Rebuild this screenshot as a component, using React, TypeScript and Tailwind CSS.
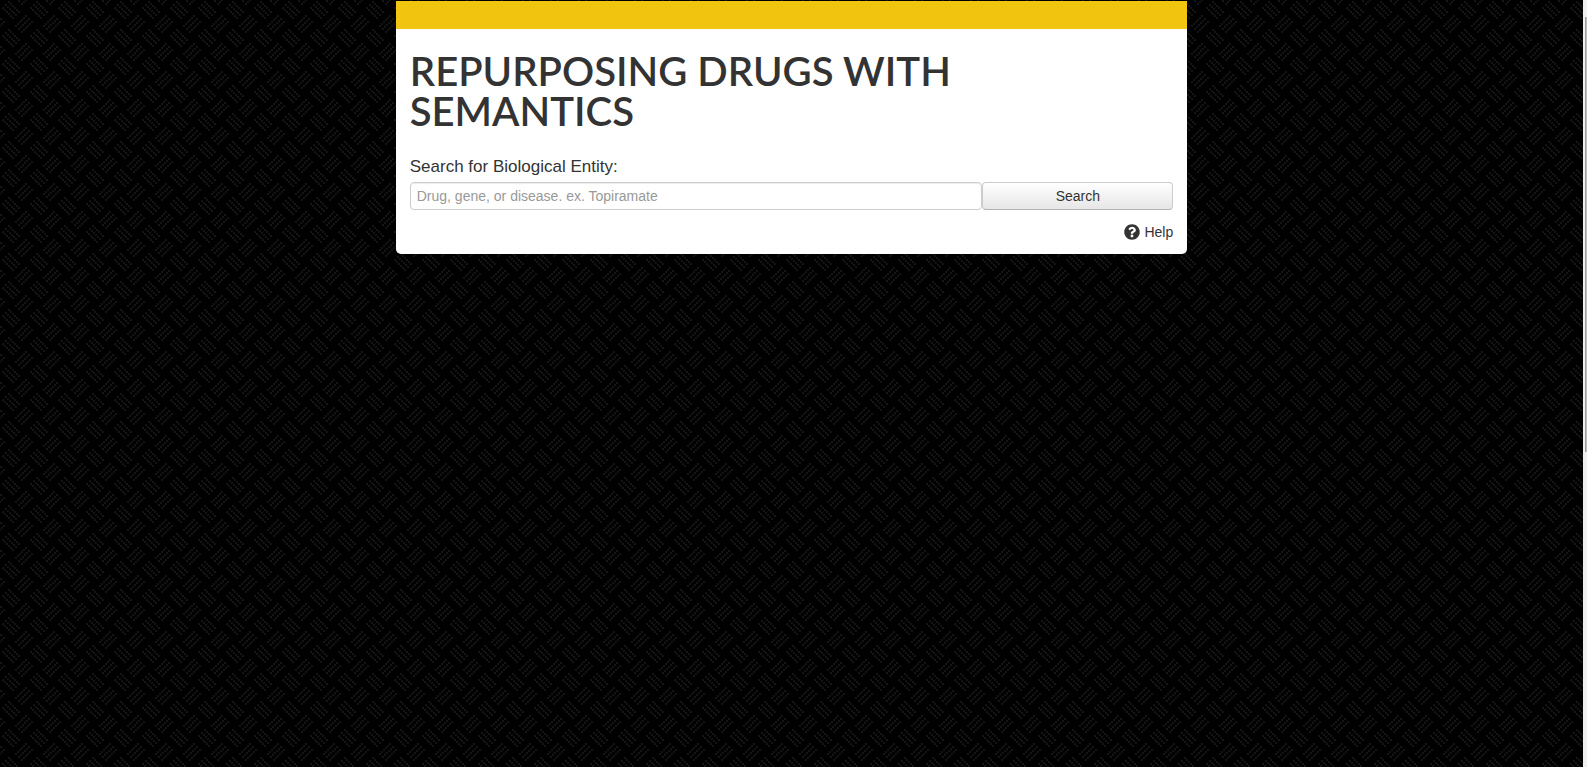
import { FaQuestionCircle } from "react-icons/fa";

const strokeOffsets = [-3, 0, 3];
const dotSteps = [-5, -3, -1, 1, 3, 5];

function WeaveBackground() {
  return (
    <svg className="absolute inset-0 -z-10 h-full w-full" aria-hidden="true">
      <defs>
        <pattern id="weave" width="28" height="28" patternUnits="userSpaceOnUse">
          <rect width="28" height="28" fill="#000" />
          {strokeOffsets.map((s) =>
            dotSteps.map((d) => (
              <g key={`${s}:${d}`} fill="#151515">
                <rect x={10 + d + s} y={9 + d - s} width="2" height="2" />
                <rect x={23 + d + s} y={23 - d + s} width="2" height="2" />
                <rect x={-5 + d + s} y={23 - d + s} width="2" height="2" />
                <rect x={23 + d + s} y={-5 - d + s} width="2" height="2" />
                <rect x={-5 + d + s} y={-5 - d + s} width="2" height="2" />
              </g>
            )),
          )}
        </pattern>
      </defs>
      <rect width="100%" height="100%" fill="url(#weave)" />
    </svg>
  );
}

function Scrollbar() {
  return (
    <div className="flex w-1 shrink-0 flex-col bg-[#f0f0f0] pt-[17px] pl-[2px]" aria-hidden="true">
      <div className="h-[58%] border-l border-[#a0a0a0] bg-[#bdbdbd]" />
    </div>
  );
}

export default function App() {
  return (
    <div className="flex min-h-screen bg-black font-['Liberation_Sans',Arial,sans-serif] text-[#333333]">
      <div className="relative isolate flex-1 pt-px">
        <WeaveBackground />
        <main className="mx-auto w-1/2 overflow-hidden rounded-b-[5px] bg-white">
          <div className="h-7 bg-[#f1c40f]" />
          <div className="px-3.5 pt-[22px] pb-3">
            <h1 className="font-['Lato',sans-serif] text-[40px] leading-10 font-semibold">
              REPURPOSING DRUGS WITH SEMANTICS
            </h1>
            <form className="mt-[26px]" onSubmit={(e) => e.preventDefault()}>
              <label htmlFor="entity" className="block text-[17px] leading-5">
                Search for Biological Entity:
              </label>
              <div className="mt-[5px] flex">
                <input
                  id="entity"
                  type="text"
                  placeholder="Drug, gene, or disease. ex. Topiramate"
                  className="h-7 w-3/4 rounded-[4px] border border-[#cccccc] bg-white px-1.5 text-sm shadow-[inset_0_1px_1px_rgba(0,0,0,0.075)] placeholder:text-[#999999]"
                />
                <button
                  type="submit"
                  className="h-7 w-1/4 rounded-[4px] border border-[#cccccc] border-b-[#b3b3b3] bg-linear-to-b from-white to-[#e6e6e6] text-sm"
                >
                  Search
                </button>
              </div>
            </form>
            <div className="mt-3 flex justify-end">
              <a href="#help" className="flex items-center gap-1 text-sm leading-5">
                <FaQuestionCircle className="size-4" />
                Help
              </a>
            </div>
          </div>
        </main>
      </div>
      <Scrollbar />
    </div>
  );
}
